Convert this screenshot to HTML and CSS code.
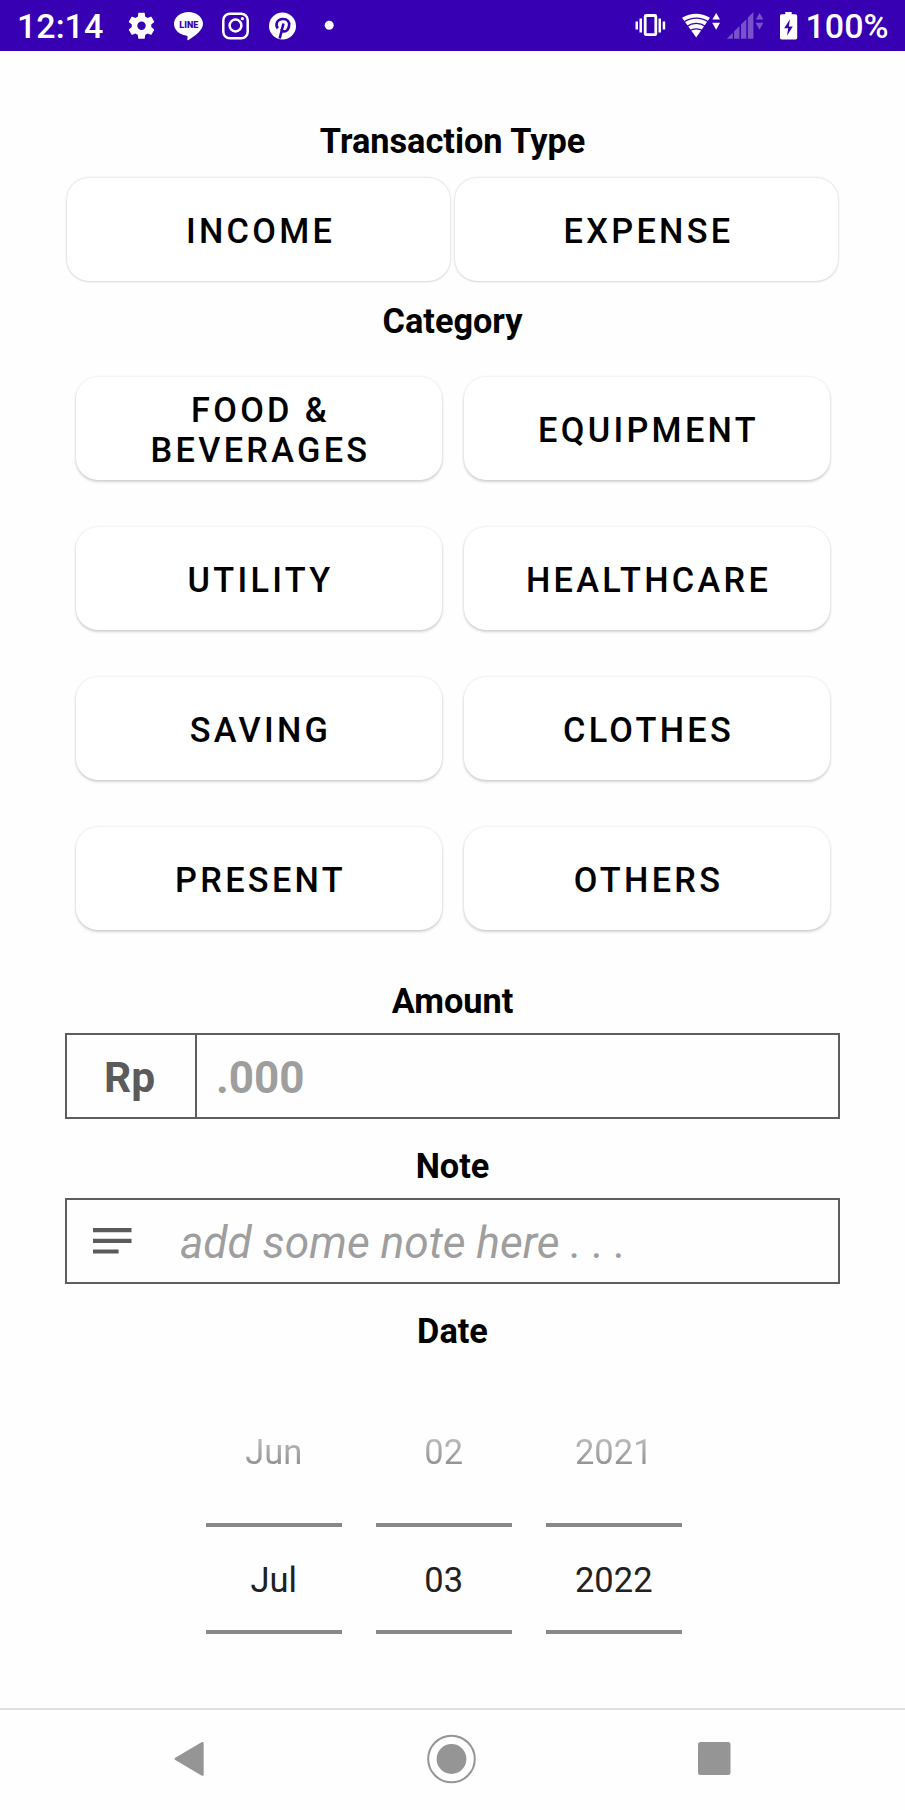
FILE: index.html
```html
<!DOCTYPE html>
<html lang="en">
<head>
<meta charset="utf-8">
<title>Transaction</title>
<link rel="stylesheet" href="styles.css">
</head>
<body>
<header class="status">
  <span class="clock">12:14</span>
  <svg class="status-icons" width="220" height="51" viewBox="120 0 220 51" fill="#fff">
    <path transform="translate(125.2 9.4) scale(1.36)" d="M19.14 12.94c.04-.3.06-.61.06-.94s-.02-.64-.07-.94l2.03-1.58a.49.49 0 0 0 .12-.61l-1.92-3.32a.49.49 0 0 0-.59-.22l-2.39.96a7 7 0 0 0-1.62-.94l-.36-2.54a.48.48 0 0 0-.48-.41h-3.84c-.24 0-.43.17-.47.41l-.36 2.54c-.59.24-1.13.57-1.62.94l-2.39-.96a.49.49 0 0 0-.59.22L2.74 8.87c-.12.21-.08.47.12.61l2.03 1.58c-.05.3-.09.63-.09.94s.02.64.07.94l-2.03 1.58a.49.49 0 0 0-.12.61l1.92 3.32c.12.22.37.29.59.22l2.39-.96c.5.38 1.03.7 1.62.94l.36 2.54c.05.24.24.41.48.41h3.84c.24 0 .44-.17.47-.41l.36-2.54c.59-.24 1.13-.56 1.62-.94l2.39.96c.22.08.47 0 .59-.22l1.92-3.32a.49.49 0 0 0-.12-.61zM12 15.1a3.1 3.1 0 1 1 0-6.2 3.1 3.1 0 0 1 0 6.2z"/>
    <path d="M188.500 12c8 0 14.500 5.200 14.500 11.800 0 6.500-8.500 12.600-14.500 16.200-1.400.7-1.200-.4-1-2.200.2-1.500 0-2-1.500-2.300-7-.9-12-5.700-12-11.700C174 17.200 180.500 12 188.500 12z"/>
    <text class="line-logo" x="188.800" y="27.500" text-anchor="middle">LINE</text>
    <g fill="none" stroke="#fff" stroke-width="2.500"><rect x="223.300" y="13.800" width="24.400" height="24.400" rx="6.500"/><circle cx="235.500" cy="25.500" r="5.900"/></g>
    <circle cx="242.400" cy="18.700" r="1.600"/>
    <circle cx="282.500" cy="26" r="13.500"/>
    <path d="M277.800 28.400c-2.700-3.200-1.200-9.200 5-9.400 4.600-.1 6.900 2.800 6.300 6.500-.5 4-2.800 6.200-5.200 5.900-1.700-.2-2.400-1.300-2.400-2.500M283.500 23.500L279.700 38.500" fill="none" stroke="#3700b3" stroke-width="2.600"/>
    <circle cx="329.200" cy="25.200" r="4.500"/>
  </svg>
  <svg class="status-icons right" width="170" height="51" viewBox="630 0 170 51" fill="#fff">
    <path d="M635.500 21.500h2.500v8h-2.500zM639.500 18.500h2.500v14h-2.500zM658.500 18.500h2.500v14h-2.500zM662.700 21.500h2.500v8h-2.500z"/>
    <rect x="645.200" y="15.500" width="10.600" height="19.200" rx="1" fill="none" stroke="#fff" stroke-width="2.800"/>
    <path d="M682 17.800q14-8.200 28 0L696.200 37.500z"/>
    <path d="M683.500 22.300q12.700-8.200 25.500 0M686.500 26.600q9.700-6.300 19.500 0M689.500 30.800q6.700-4 13.500 0" fill="none" stroke="#3700b3" stroke-width="1.300"/>
    <path d="M716.200 13l3.800 6.600h-7.600zM712.200 22.700h7.800l-3.900 7z"/>
    <g opacity=".32"><path d="M726.800 38.800l6-6v6zM734 31.500l5.500-5.500v12.800H734zM741 24.500l5.300-5.300v19.600H741zM747.800 17.700l5.600-5.600v26.700h-5.600zM759.600 13l3.800 6.600h-7.600zM755.600 22.700h7.800l-3.900 7z"/></g>
    <path fill-rule="evenodd" d="M785.300 12h6.400v2.300h3.800c1 0 1.700.7 1.700 1.700v21.800c0 1-.7 1.700-1.700 1.700h-13.800c-1 0-1.700-.7-1.700-1.700V16c0-1 .7-1.700 1.700-1.700h3.600zM790 19.200l-5.800 9h4l-1.200 7.600 5.800-9.200h-4z"/>
  </svg>
  <span class="battery">100%</span>
</header>

<main class="form">
  <h2 class="label">Transaction Type</h2>
  <div class="types">
    <button class="choice">INCOME</button>
    <button class="choice">EXPENSE</button>
  </div>

  <h2 class="label label-category">Category</h2>
  <div class="categories">
    <button class="choice raised">FOOD &amp;<br>BEVERAGES</button>
    <button class="choice raised">EQUIPMENT</button>
    <button class="choice raised">UTILITY</button>
    <button class="choice raised">HEALTHCARE</button>
    <button class="choice raised">SAVING</button>
    <button class="choice raised">CLOTHES</button>
    <button class="choice raised">PRESENT</button>
    <button class="choice raised">OTHERS</button>
  </div>

  <h2 class="label label-amount">Amount</h2>
  <div class="field">
    <span class="currency">Rp</span>
    <span class="amount">.000</span>
  </div>

  <h2 class="label label-field">Note</h2>
  <div class="field note">
    <svg width="39" height="26" viewBox="0 0 39 26" fill="#5b5b5b"><path d="M0 0h38.500v4.200H0zM0 10.700h38.500v4.200H0zM0 21.400h25.600v4.200H0z"/></svg>
    <span class="placeholder">add some note here . . .</span>
  </div>

  <h2 class="label label-field">Date</h2>
  <div class="picker">
    <div class="wheel"><span class="previous">Jun</span><span class="current">Jul</span></div>
    <div class="wheel"><span class="previous">02</span><span class="current">03</span></div>
    <div class="wheel"><span class="previous">2021</span><span class="current">2022</span></div>
  </div>
</main>

<nav class="navbar">
  <svg width="30" height="36" viewBox="0 0 30 36" fill="#959595"><path d="M27.500 1.200Q29.700.3 29.700 2v31.700q0 1.700-2.200.8L1.300 19q-1.600-1.100 0-2.200z"/></svg>
  <svg width="50" height="50" viewBox="0 0 50 50" fill="#959595"><circle cx="25.500" cy="25" r="23.300" fill="none" stroke="#959595" stroke-width="2"/><circle cx="25.500" cy="25" r="14.900"/></svg>
  <svg width="33" height="33" viewBox="0 0 33 33" fill="#959595"><rect width="32.500" height="33" rx="2.500"/></svg>
</nav>
</body>
</html>
```
FILE: styles.css
```css
* { box-sizing: border-box; }
body {
  margin: 0;
  height: 1810px;
  display: flex;
  flex-direction: column;
  overflow: hidden;
  background: #fefefe;
  color: #000;
  font-family: Roboto, sans-serif;
}
.status {
  flex: none;
  height: 51px;
  display: flex;
  align-items: center;
  background: #3700b3;
  color: #fff;
}
.clock, .battery {
  font-size: 34px;
  font-weight: 500;
  line-height: 40px;
  padding-top: 1px;
}
.clock { width: 103px; margin-left: 17px; }
.status-icons { flex: none; display: block; }
.status-icons.right { margin-left: 290px; }
.battery { margin-left: 5.500px; }
.line-logo { font: 900 9px Roboto, sans-serif; fill: #3700b3; }

.form {
  flex: none;
  height: 1657px;
  padding: 70px 65px 0;
}
.label {
  margin: 0;
  height: 40px;
  line-height: 40px;
  font-size: 34.300px;
  font-weight: 700;
  text-align: center;
}
.types {
  display: grid;
  grid-template-columns: 383px 383px;
  gap: 5px;
  padding: 0 2px;
  margin-top: 17px;
}
.choice {
  height: 103px;
  padding: 2px 0 0 4px;
  border: 0;
  border-radius: 22px;
  background: #fff;
  color: #000;
  font: 500 34.300px/40px Roboto, sans-serif;
  letter-spacing: 3.300px;
  box-shadow: 0 0 2px 1px rgba(0, 0, 0, .09), 0 1px 2px rgba(0, 0, 0, .08);
}
.raised {
  box-shadow: 0 2px 3px rgba(0, 0, 0, .16), 0 0 2px 1px rgba(0, 0, 0, .05);
}
.label-category { margin-top: 20px; }
.categories {
  display: grid;
  grid-template-columns: 366px 366px;
  column-gap: 22px;
  row-gap: 47px;
  padding: 0 10.500px;
  margin-top: 36px;
}
.label-amount { margin-top: 51px; }
.field {
  height: 86px;
  margin-top: 12px;
  display: flex;
  align-items: center;
  border: 2px solid #5e5e5e;
  font-size: 44px;
}
.currency {
  width: 130px;
  height: 100%;
  border-right: 2px solid #5e5e5e;
  color: #5b5b5b;
  font-size: 42.500px;
  font-weight: 700;
  line-height: 86px;
  padding-right: 3px;
  text-align: center;
}
.amount {
  padding-left: 19px;
  color: #9e9e9e;
  font-weight: 700;
  line-height: 82px;
  padding-top: 3px;
}
.label-field { margin-top: 27px; }
.note { padding-left: 26px; }
.placeholder {
  margin-left: 48px;
  color: #9e9e9e;
  font-size: 44.250px;
  font-style: italic;
  line-height: 78px;
  padding-top: 4px;
}
.picker {
  display: grid;
  grid-template-columns: repeat(3, 136.500px);
  column-gap: 33.500px;
  margin: 81px 0 0 140.500px;
}
.wheel {
  display: flex;
  flex-direction: column;
  text-align: center;
  font-size: 34.500px;
}
.previous {
  height: 91px;
  line-height: 40px;
  color: transparent;
  background: linear-gradient(#bcbcbc 6px, #929292 33px);
  background-clip: text;
  -webkit-background-clip: text;
}
.current {
  height: 111px;
  border-top: 4px solid #888;
  border-bottom: 4px solid #888;
  color: #212121;
  line-height: 106px;
}
.navbar {
  flex: none;
  height: 102px;
  display: flex;
  align-items: center;
  justify-content: space-between;
  border-top: 2px solid #e0e0e0;
  padding: 0 174px 3px;
}
```
